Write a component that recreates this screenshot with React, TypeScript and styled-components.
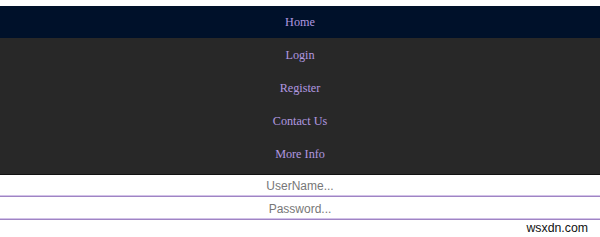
import React from "react";
import styled, { createGlobalStyle } from "styled-components";

const Global = createGlobalStyle`
  html, body { margin: 0; padding: 0; background: #ffffff; }
  body { width: 600px; overflow: hidden; }
`;

const Page = styled.div`
  display: flex;
  flex-direction: column;
  padding-top: 6px;
`;

const Nav = styled.nav`
  display: flex;
  flex-direction: column;
  background: #282828;
  padding-bottom: 4px;
  border-bottom: 1px solid #111111;
`;

const NavItem = styled.a<{ $active?: boolean }>`
  display: flex;
  align-items: center;
  justify-content: center;
  height: ${(p) => (p.$active ? "32px" : "33px")};
  padding-top: 1px;
  box-sizing: border-box;
  background: ${(p) => (p.$active ? "#00112a" : "transparent")};
  color: #b198e0;
  font-family: "Liberation Serif", "Times New Roman", serif;
  font-size: 12.2px;
  text-decoration: none;
`;

const Form = styled.form`
  display: flex;
  flex-direction: column;
  gap: 1px;
`;

const Field = styled.input`
  box-sizing: border-box;
  width: 100%;
  height: 22px;
  margin: 0;
  padding: 0;
  border: none;
  border-bottom: 1px solid #9f84c4;
  box-shadow: inset 0 -1px 0 0 #d2c2e8;
  background: #ffffff;
  text-align: center;
  font-family: "Liberation Sans", Arial, sans-serif;
  font-size: 12px;
  outline: none;
  &::placeholder { color: #777777; }
`;

const Footer = styled.div`
  display: flex;
  justify-content: flex-end;
  padding: 0 12px 0 0;
  font-family: "Liberation Sans", Arial, sans-serif;
  font-size: 12.3px;
  color: #111111;
  line-height: 14px;
  margin-top: 1px;
`;

export default function App() {
  return (
    <Page>
      <Global />
      <Nav>
        <NavItem $active href="#">Home</NavItem>
        <NavItem href="#">Login</NavItem>
        <NavItem href="#">Register</NavItem>
        <NavItem href="#">Contact Us</NavItem>
        <NavItem href="#">More Info</NavItem>
      </Nav>
      <Form>
        <Field placeholder="UserName..." />
        <Field placeholder="Password..." />
      </Form>
      <Footer>wsxdn.com</Footer>
    </Page>
  );
}
